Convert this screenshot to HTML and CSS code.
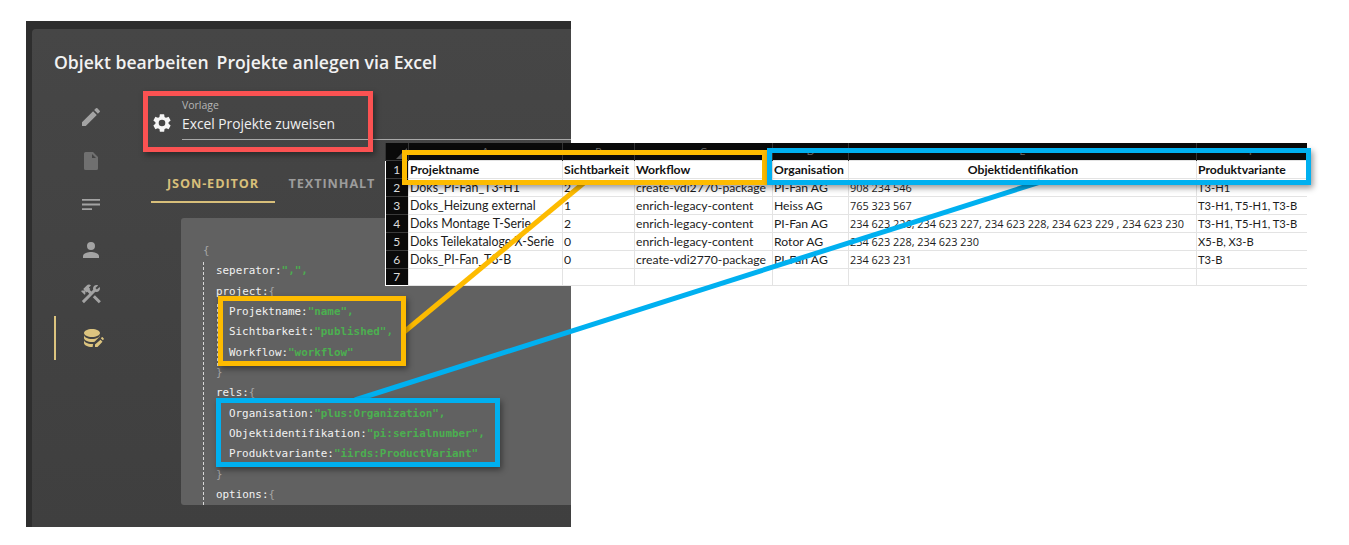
FILE: index.html
```html
<!DOCTYPE html>
<html lang="de">
<head>
<meta charset="utf-8">
<title>Projekte anlegen via Excel</title>
<link rel="stylesheet" href="styles.css">
</head>
<body>
<div class="stage">
  <div class="window">
    <div class="panel">
      <h1 class="title"><span>Objekt bearbeiten</span><span>Projekte anlegen via Excel</span></h1>
      <div class="content">
        <nav class="rail">
          <svg class="icon" viewBox="0 0 24 24"><path d="M3 17.25V21h3.75L17.81 9.94l-3.75-3.75L3 17.25zM20.71 7.04a1 1 0 0 0 0-1.41l-2.34-2.34a1 1 0 0 0-1.41 0l-1.83 1.83 3.75 3.75 1.83-1.83z"/></svg>
          <svg class="icon icon-dim" viewBox="0 0 24 24"><path d="M14 3H6.500A1.500 1.500 0 0 0 5 4.500v15A1.500 1.500 0 0 0 6.500 21h11a1.500 1.500 0 0 0 1.500-1.500V8l-5-5zm-1 6V5l4 4h-4z"/></svg>
          <svg class="icon" viewBox="0 0 24 24"><path d="M3 6h18v1.8H3zM3 10.6h18v1.8H3zM3 15.200h10v1.800H3z"/></svg>
          <svg class="icon" viewBox="0 0 24 24"><path d="M12 12a4 4 0 1 0 0-8 4 4 0 0 0 0 8zm0 2c-2.670 0-8 1.340-8 4v2h16v-2c0-2.660-5.330-4-8-4z"/></svg>
          <svg class="icon" viewBox="0 0 24 24"><path d="M13.78 15.3l6 6 2.11-2.16-6-6zM17.5 10c1.93 0 3.5-1.57 3.5-3.5 0-.58-.16-1.12-.41-1.6l-2.7 2.7-1.49-1.49 2.7-2.7c-.48-.25-1.02-.41-1.6-.41C15.57 3 14 4.57 14 6.5c0 .41.08.8.21 1.16l-1.85 1.85-1.78-1.78.71-.71-1.41-1.41L12 3.49c-1.17-1.17-3.07-1.17-4.24 0L4.22 7.03l1.41 1.41H2.81l-.71.71 3.54 3.54.71-.71V9.15l1.41 1.41.71-.71 1.78 1.78-7.41 7.41 2.12 2.12L16.34 9.79c.36.13.75.21 1.16.21z"/></svg>
          <div class="rail-active">
            <svg class="icon icon-gold" viewBox="0 0 24 24"><path d="M11 3C6.600 3 3 4.800 3 7s3.600 4 8 4 8-1.800 8-4-3.600-4-8-4zM3 9v3c0 2.200 3.600 4 8 4 .9 0 1.800-.1 2.600-.2l4.200-4.200c.8-.6 1.200-1.100 1.200-1.600V9c0 2.200-3.600 4-8 4s-8-1.800-8-4zM3 14v3c0 2.200 3.600 4 8 4h.6l.4-2.600.4-.5c-.4 0-.9.100-1.400.100-4.400 0-8-1.800-8-4zM22.800 12.400l-1.200-1.200c-.2-.2-.6-.2-.8 0l-1 1 2 2 1-1c.2-.2.2-.6 0-.8zM14 18.500V21h2.500l5-5.300-2-2z"/></svg>
          </div>
        </nav>
        <main class="main">
          <div class="field">
            <svg class="gear" viewBox="0 0 24 24"><path d="M19.140 12.940c.04-.3.06-.61.06-.94 0-.32-.02-.64-.07-.94l2.030-1.580a.49.49 0 0 0 .12-.61l-1.920-3.320a.488.488 0 0 0-.59-.22l-2.390.96c-.5-.38-1.030-.7-1.620-.94l-.36-2.540a.484.484 0 0 0-.48-.41h-3.840c-.24 0-.43.17-.47.41l-.36 2.540c-.59.24-1.130.57-1.620.94l-2.390-.96c-.22-.08-.47 0-.59.22L2.740 8.870c-.12.21-.08.47.12.61l2.030 1.580c-.05.3-.09.63-.09.94s.02.64.07.94l-2.030 1.580a.49.49 0 0 0-.12.61l1.920 3.320c.12.22.37.29.59.22l2.390-.96c.5.38 1.030.7 1.620.94l.36 2.540c.05.24.24.41.48.41h3.840c.24 0 .44-.17.47-.41l.36-2.540c.59-.24 1.130-.56 1.620-.94l2.390.96c.22.08.47 0 .59-.22l1.920-3.320c.12-.22.07-.47-.12-.61l-2.010-1.580zM12 15.600A3.600 3.600 0 1 1 12 8.400a3.600 3.600 0 0 1 0 7.200z"/></svg>
            <div class="field-body">
              <div class="field-label">Vorlage</div>
              <div class="field-value">Excel Projekte zuweisen</div>
            </div>
          </div>
          <div class="tabs">
            <div class="tab tab-on">JSON-EDITOR</div>
            <div class="tab">TEXTINHALT</div>
          </div>
          <div class="code">
            <div class="guide"></div>
            <div class="guide guide-inner"></div>
            <div class="ln"><b>{</b></div>
            <div class="ln i1">seperator:<em>","</em><em>,</em></div>
            <div class="ln i1">project:<b>{</b></div>
            <div class="ln i2">Projektname:<em>"name"</em><em>,</em></div>
            <div class="ln i2">Sichtbarkeit:<em>"published"</em><em>,</em></div>
            <div class="ln i2">Workflow:<em>"workflow"</em></div>
            <div class="ln i1"><b>}</b></div>
            <div class="ln i1">rels:<b>{</b></div>
            <div class="ln i2">Organisation:<em>"plus:Organization"</em><em>,</em></div>
            <div class="ln i2">Objektidentifikation:<em>"pi:serialnumber"</em><em>,</em></div>
            <div class="ln i2">Produktvariante:<em>"iirds:ProductVariant"</em></div>
            <div class="ln i1"><b>}</b></div>
            <div class="ln i1">options:<b>{</b></div>
          </div>
        </main>
      </div>
    </div>
  </div>

  <table class="sheet">
    <colgroup><col class="c0"><col class="c1"><col class="c2"><col class="c3"><col class="c4"><col class="c5"><col class="c6"></colgroup>
    <tr class="letters"><th class="corner"><span class="tri"></span></th><th>A</th><th>B</th><th>C</th><th>D</th><th>E</th><th>F</th></tr>
    <tr class="head"><th class="num">1</th><td>Projektname</td><td>Sichtbarkeit</td><td>Workflow</td><td>Organisation</td><td class="mid">Objektidentifikation</td><td>Produktvariante</td></tr>
    <tr><th class="num">2</th><td>Doks_PI-Fan_T3-H1</td><td>2</td><td>create-vdi2770-package</td><td>PI-Fan AG</td><td>908 234 546</td><td>T3-H1</td></tr>
    <tr><th class="num">3</th><td>Doks_Heizung external</td><td>1</td><td>enrich-legacy-content</td><td>Heiss AG</td><td>765 323 567</td><td>T3-H1, T5-H1, T3-B</td></tr>
    <tr><th class="num">4</th><td>Doks Montage T-Serie</td><td>2</td><td>enrich-legacy-content</td><td>PI-Fan AG</td><td>234 623 226, 234 623 227, 234 623 228, 234 623 229 , 234 623 230</td><td>T3-H1, T5-H1, T3-B</td></tr>
    <tr><th class="num">5</th><td>Doks Teilekataloge X-Serie</td><td>0</td><td>enrich-legacy-content</td><td>Rotor AG</td><td>234 623 228, 234 623 230</td><td>X5-B, X3-B</td></tr>
    <tr><th class="num">6</th><td>Doks_PI-Fan_T3-B</td><td>0</td><td>create-vdi2770-package</td><td>PI-Fan AG</td><td>234 623 231</td><td>T3-B</td></tr>
    <tr class="last"><th class="num">7</th><td></td><td></td><td></td><td></td><td></td><td></td></tr>
  </table>

  <svg class="wires" viewBox="0 0 1349 545">
    <line class="wire-y" x1="404" y1="332" x2="585" y2="182"/>
    <line class="wire-b" x1="355" y1="400" x2="1040" y2="182"/>
  </svg>

  <div class="box box-red"></div>
  <div class="box box-y1"></div>
  <div class="box box-y2"></div>
  <div class="box box-b1"></div>
  <div class="box box-b2"></div>
</div>
</body>
</html>
```
FILE: styles.css
```css
* { box-sizing: border-box; }
html, body { margin: 0; padding: 0; background: #fff; }
.stage { position: relative; width: 1349px; height: 545px; overflow: hidden; font-family: "Open Sans", "Noto Sans", sans-serif; }

.window { width: 545px; height: 506px; margin: 21px 0 0 26px; padding: 8px 0 0 6px; background: #2e2e2e; overflow: hidden; position: absolute; }
.panel { height: 498px; background: linear-gradient(#464646, #3f3f3f); border-radius: 4px 0 0 0; padding: 22px 0 0 22px; }
.title { margin: 0; display: flex; gap: 8px; font-size: 17.6px; line-height: 22px; font-weight: 600; color: #f2f2f2; white-space: nowrap; }
.content { display: flex; }
.rail { width: 90px; flex: none; margin-top: 32px; display: flex; flex-direction: column; align-items: flex-start; gap: 20.2px; }
.icon { width: 24px; height: 24px; margin-left: 25px; fill: #a3a3a3; display: block; }
.icon-dim { fill: #707070; }
.icon-gold { fill: #dcc47f; margin-left: 0; }
.rail-active { width: 100%; height: 44px; margin-top: -10px; border-left: 2px solid #dcc47f; padding: 10px 0 0 25px; }

.main { flex: 1; min-width: 0; margin-top: 20px; margin-left: 7px; }
.field { display: flex; align-items: flex-end; gap: 9px; }
.gear { width: 22px; height: 22px; fill: #f5f5f5; flex: none; margin-bottom: 6px; }
.field-body { flex: 1; height: 47px; border-bottom: 1px solid #a8a8a8; padding-top: 5px; }
.field-label { font-size: 10.5px; line-height: 14px; color: #b5b5b5; }
.field-value { font-size: 13.8px; line-height: 20px; margin-top: 2px; color: #f0f0f0; white-space: nowrap; }

.tabs { display: flex; margin-top: 26px; height: 37px; }
.tab { width: 124px; text-align: center; font-size: 12.7px; font-weight: 700; letter-spacing: .9px; line-height: 34px; color: #9c9c9c; white-space: nowrap; }
.tab + .tab { width: 114px; }
.tab-on { color: #d8bf7a; border-bottom: 2px solid #d8bf7a; }

.code { position: relative; margin: 15px 0 0 30px; height: 287px; background: #616161; border-radius: 3px 0 0 3px; padding: 23px 0 0 22px; overflow: hidden; font-family: "DejaVu Sans Mono", "Liberation Mono", monospace; font-size: 10.9px; line-height: 20.350px; color: #f2f2f2; white-space: nowrap; }
.ln b { font-weight: 400; color: #a5a5a5; }
.ln em { font-style: normal; color: #4caf50; font-weight: 700; }
.i1 { padding-left: 13px; }
.i2 { padding-left: 26px; }
.guide { position: absolute; left: 22px; top: 44px; bottom: 0; border-left: 1px dashed #d8d8d8; }
.guide-inner { left: 36px; top: 86px; bottom: auto; height: 62px; }

.sheet { position: absolute; left: 385px; top: 143px; width: 921px; border-collapse: collapse; table-layout: fixed; background: #fff; font-family: Lato, "Open Sans", sans-serif; font-size: 12.4px; color: #1c1c1c; }
.c0 { width: 23px; } .c1 { width: 154px; } .c2 { width: 72px; } .c3 { width: 138px; } .c4 { width: 76px; } .c5 { width: 348px; } .c6 { width: 110px; }
.sheet tr { height: 18px; }
.sheet td { padding: 0 0 0 1px; border: 1px solid #e3e3e3; white-space: nowrap; overflow: hidden; line-height: 15px; }
.sheet td:nth-child(3), .sheet td:nth-child(4), .sheet td:nth-child(5) { font-size: 12.2px; }
.sheet td:nth-child(6) { font-family: "Open Sans", sans-serif; font-size: 10.9px; }
.sheet td:nth-child(7) { font-size: 11.2px; }
.sheet td:last-child { border-right: 0; }
.sheet th { font-weight: 400; }
.sheet .letters { height: 17px; }
.sheet .head { height: 18px; }
.sheet .last { height: 17px; }
.letters th { background: #0a0a0a; color: #6a6a6a; font-size: 10px; line-height: 10px; vertical-align: top; border-left: 1px solid #333; padding: 3px 0 0; }
.corner { position: relative; }
.tri { position: absolute; right: 1px; bottom: 1px; border-style: solid; border-width: 0 0 11px 11px; border-color: transparent transparent #5a5a5a transparent; }
.num { background: #0a0a0a; color: #dcdcdc; border-top: 1px solid #3a3a3a; font-size: 12px; line-height: 15px; padding: 0; }
.sheet .head td { font-family: Lato, sans-serif; font-size: 12.2px; font-weight: 700; color: #111; }
.mid { text-align: center; }

.wires { position: absolute; left: 0; top: 0; width: 1349px; height: 545px; }
.wire-y { stroke: #fdbb00; stroke-width: 5; }
.wire-b { stroke: #00b0f0; stroke-width: 5; }

.box { position: absolute; box-shadow: 2px 3px 6px rgba(0,0,0,.4); }
.box-red { left: 143px; top: 91px; width: 230px; height: 61px; border: 5px solid #fb5252; }
.box-y1 { left: 402px; top: 150px; width: 365px; height: 35px; border: 5px solid #fdbb00; }
.box-y2 { left: 218px; top: 296px; width: 188px; height: 70px; border: 5px solid #fdbb00; }
.box-b1 { left: 767px; top: 148px; width: 544px; height: 37px; border: 5px solid #00b0f0; }
.box-b2 { left: 216px; top: 398px; width: 284px; height: 69px; border: 5px solid #00b0f0; }
```
